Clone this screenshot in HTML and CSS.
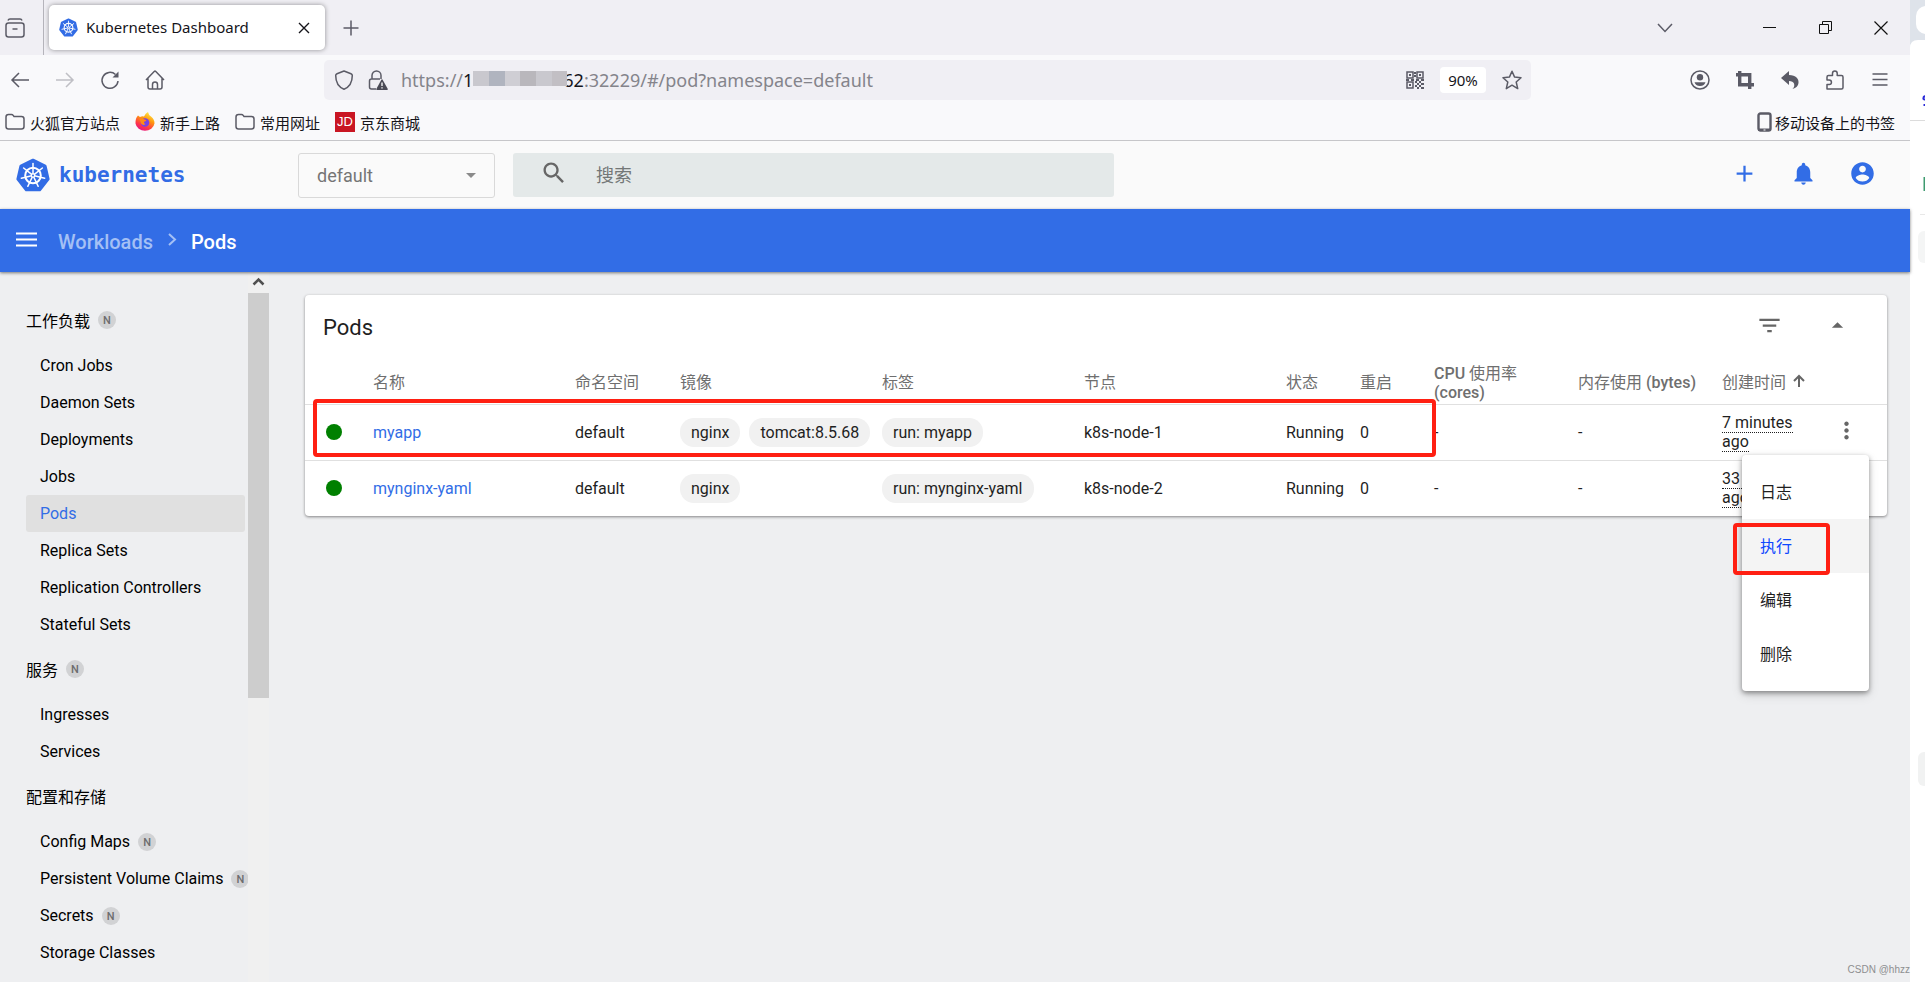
FILE: index.html
```html
<!DOCTYPE html>
<html lang="zh-CN">
<head>
<meta charset="utf-8">
<title>Kubernetes Dashboard</title>
<link rel="stylesheet" href="styles.css">
</head>
<body>
<svg class="defs" aria-hidden="true">
  <symbol id="k8s" viewBox="0 0 34 34">
    <path d="M17 2.2 29.1 8 32.1 21.1 23.7 31.7H10.3L1.9 21.1 4.9 8Z" fill="#326ce5" stroke="#326ce5" stroke-width="3" stroke-linejoin="round"/>
    <g fill="none" stroke="#fff" stroke-width="2">
      <circle cx="17" cy="17.5" r="7.8"/>
      <g id="spokes" stroke-width="1.5" stroke-linecap="round">
        <path d="M17 15V5.5"/>
        <path d="M17 15V5.5" transform="rotate(51.43 17 17.5)"/>
        <path d="M17 15V5.5" transform="rotate(102.86 17 17.5)"/>
        <path d="M17 15V5.5" transform="rotate(154.29 17 17.5)"/>
        <path d="M17 15V5.5" transform="rotate(205.71 17 17.5)"/>
        <path d="M17 15V5.5" transform="rotate(257.14 17 17.5)"/>
        <path d="M17 15V5.5" transform="rotate(308.57 17 17.5)"/>
      </g>
    </g>
    <circle cx="17" cy="17.5" r="2.4" fill="#fff"/>
    <circle cx="17" cy="17.5" r="1" fill="#326ce5"/>
  </symbol>
  <symbol id="folder" viewBox="0 0 20 20">
    <path d="M1 5Q1 2.500 3.500 2.500H6.500Q7.500 2.500 8.200 3.400L9 4.500H16.500Q19 4.500 19 7V14.500Q19 17 16.500 17H3.500Q1 17 1 14.500Z" fill="none" stroke="#5b5b66" stroke-width="1.500"/>
  </symbol>
</svg>
<div class="screen">
  <div class="window">
    <div class="tabstrip">
      <button class="ui-btn view-btn" aria-label="Firefox View"><svg width="20" height="20" viewBox="0 0 20 20" fill="none" stroke="#5b5b66" stroke-width="1.500"><rect x="1" y="5" width="18" height="14" rx="2.500"/><path d="M3 2.500Q3.500 1 5 1H15Q16.500 1 17 2.500M7.500 11H12.500"/></svg></button>
      <div class="tab">
        <svg width="19" height="19"><use href="#k8s"/></svg>
        <span class="tab-title">Kubernetes Dashboard</span>
        <button class="ui-btn" aria-label="关闭标签页"><svg width="12" height="12" viewBox="0 0 12 12" stroke="#15141a" stroke-width="1.400"><path d="M1 1 11 11M11 1 1 11"/></svg></button>
      </div>
      <button class="ui-btn add-btn" aria-label="新建标签页"><svg width="16" height="16" viewBox="0 0 16 16" stroke="#5b5b66" stroke-width="1.500"><path d="M8 .5V15.500M.5 8H15.500"/></svg></button>
      <div class="win-controls">
        <button class="ui-btn list-btn" aria-label="列出标签页"><svg width="16" height="10" viewBox="0 0 16 10" fill="none" stroke="#5b5b66" stroke-width="1.500"><path d="M1 1 8 8.500 15 1"/></svg></button>
        <button class="ui-btn" aria-label="最小化"><svg width="13" height="13" viewBox="0 0 13 13" stroke="#111"><path d="M0 6.500H13"/></svg></button>
        <button class="ui-btn" aria-label="还原"><svg width="13" height="13" viewBox="0 0 13 13" fill="none" stroke="#111"><path d="M.5 3.500H9.500V12.500H.5ZM3.500 3.500V.5H12.500V9.500H9.500"/></svg></button>
        <button class="ui-btn" aria-label="关闭"><svg width="14" height="14" viewBox="0 0 14 14" stroke="#111" stroke-width="1.200"><path d="M.5 .5 13.500 13.500M13.500 .5 .5 13.500"/></svg></button>
      </div>
    </div>

    <div class="navbar">
      <div class="nav-left">
        <button class="ui-btn" aria-label="后退"><svg width="20" height="20" viewBox="0 0 20 20" fill="none" stroke="#5b5b66" stroke-width="1.500"><path d="M19 10H2M9 3 2 10 9 17"/></svg></button>
        <button class="ui-btn" aria-label="前进"><svg width="20" height="20" viewBox="0 0 20 20" fill="none" stroke="#bfbfc5" stroke-width="1.500"><path d="M1 10H18M11 3 18 10 11 17"/></svg></button>
        <button class="ui-btn" aria-label="重新加载"><svg width="20" height="20" viewBox="0 0 20 20" fill="none" stroke="#5b5b66" stroke-width="1.500"><path d="M18 11A8 8 0 1 1 15.500 4.500"/><path d="M18.500 1.500V7.500H12.500Z" fill="#5b5b66" stroke="none"/></svg></button>
        <button class="ui-btn" aria-label="主页"><svg width="20" height="20" viewBox="0 0 20 20" fill="none" stroke="#5b5b66" stroke-width="1.500" stroke-linejoin="round"><path d="M1 10 9.200 1.500Q10 .8 10.800 1.500L19 10M3 8.500V17Q3 19 5 19H15Q17 19 17 17V8.500M7.500 19V14.500Q7.500 12 10 12T12.500 14.500V19"/></svg></button>
      </div>
      <div class="urlbar">
        <svg width="20" height="20" viewBox="0 0 20 20" fill="none" stroke="#5b5b66" stroke-width="1.500" stroke-linejoin="round"><path d="M10 1 17 3.700Q18.300 4.200 18.300 5.500C18.300 12 15.500 17 10 19.200C4.500 17 1.700 12 1.700 5.500Q1.700 4.200 3 3.700Z"/></svg>
        <svg class="lock" width="20" height="20" viewBox="0 0 20 20"><path d="M4 9V5.500A4.500 4.500 0 0 1 13 5.500V9M8 19H3.500Q1.500 19 1.500 17V11Q1.500 9 3.500 9H12" fill="none" stroke="#5b5b66" stroke-width="1.500"/><path d="M13.500 9.500Q14 8.800 14.500 9.500L19.800 19Q20 20 19 20H9Q8 20 8.300 19Z" fill="#4a4a55"/><path d="M14 12.500V16M14 17.200V18.500" stroke="#fff" stroke-width="1.300"/></svg>
        <div class="url" role="textbox" aria-label="地址" tabindex="0"><span>https://</span><b>1</b><i class="mosaic"><i></i><i></i><i></i><i></i><i></i><i></i></i><b>62</b><span>:32229/#/pod?namespace=default</span></div>
        <div class="url-actions">
          <button class="ui-btn" aria-label="二维码"><svg width="18" height="18" viewBox="0 0 18 18" fill="none" stroke="#5b5b66" stroke-width="1.500"><path d="M1 1H7V7H1ZM11 1H17V7H11ZM1 11H7V17H1Z"/><path d="M3 4H5M13 4H15M3 14H5M8 2H10M8 5H10M0 9H3M5 9H8M10 9H13M15 9H18M9 11H11M13 11H15M11 13H13M15 13H18M9 15H11M13 15H15M11 17H13M15 17H18" stroke-width="2"/></svg></button>
          <button class="ui-btn zoom">90%</button>
          <button class="ui-btn" aria-label="收藏"><svg width="20" height="20" viewBox="0 0 20 20" fill="none" stroke="#5b5b66" stroke-width="1.500" stroke-linejoin="round"><path d="M10 1.200 12.600 7.100 19 7.700 14.200 12 15.700 18.600 10 15.200 4.300 18.600 5.800 12 1 7.700 7.400 7.100Z"/></svg></button>
        </div>
      </div>
      <div class="nav-right">
        <button class="ui-btn" aria-label="账户"><svg width="20" height="20" viewBox="0 0 20 20"><circle cx="10" cy="10" r="9" fill="none" stroke="#5b5b66" stroke-width="1.500"/><circle cx="10" cy="7.300" r="3.200" fill="#5b5b66"/><path d="M4.500 12.300H15.500Q14.500 16 10 16T4.500 12.300Z" fill="#5b5b66"/></svg></button>
        <button class="ui-btn" aria-label="截图"><svg width="20" height="20" viewBox="0 0 20 20" fill="none" stroke="#5b5b66" stroke-width="3.400"><path d="M4.700 1V14.700H19M1 4.700H14.700V19"/></svg></button>
        <button class="ui-btn" aria-label="撤销"><svg width="20" height="20" viewBox="0 0 20 20" fill="#5b5b66"><path d="M1 8 9 1V5C16 5 19 9 18.500 13Q18 17.500 12.500 19Q15 16.500 14 13.500Q13 11 9 11V15Z"/></svg></button>
        <button class="ui-btn" aria-label="扩展"><svg width="20" height="20" viewBox="0 0 20 20" fill="none" stroke="#5b5b66" stroke-width="1.500" stroke-linejoin="round"><path d="M2 19V14.500H4.200A2.200 2.200 0 0 0 4.200 10H2V7Q2 5.500 3.500 5.500H7.500V3.300A2.300 2.300 0 0 1 12.200 3.300V5.500H16.500Q18 5.500 18 7V17.500Q18 19 16.500 19Z"/></svg></button>
        <button class="ui-btn" aria-label="菜单"><svg width="20" height="20" viewBox="0 0 20 20" stroke="#5b5b66" stroke-width="1.500"><path d="M2.500 4H17.500M2.500 9.500H17.500M2.500 15H17.500"/></svg></button>
      </div>
    </div>

    <div class="bookmarks">
      <a href="#"><svg width="20" height="20"><use href="#folder"/></svg>火狐官方站点</a>
      <a href="#"><svg width="20" height="20" viewBox="0 0 20 20"><defs><linearGradient id="fx" x1=".8" y1="0" x2=".3" y2="1"><stop offset="0" stop-color="#fff44f"/><stop offset=".4" stop-color="#ff980e"/><stop offset=".75" stop-color="#ff3647"/><stop offset="1" stop-color="#e31587"/></linearGradient></defs><path d="M3 3.500 5 5Q7 4 9 4.500Q10.500 1 13 0Q13.500 3 16 4.500Q19.700 7.500 19.500 11.500A9.600 8.500 0 0 1 .5 11.500Q.3 6 3 3.500Z" fill="url(#fx)"/><circle cx="10" cy="10.500" r="4.300" fill="#7542e5"/><path d="M4.500 7Q7 5.500 9.500 7.500L11.500 8Q11 9.500 9 9.800Q8.500 11.500 10.500 12Q8 14 6 11.500Z" fill="#ff8a16"/></svg>新手上路</a>
      <a href="#"><svg width="20" height="20"><use href="#folder"/></svg>常用网址</a>
      <a href="#"><span class="jd">JD</span>京东商城</a>
      <a href="#" class="mobile"><svg width="16" height="20" viewBox="0 0 16 20"><rect x="1.500" y="1.500" width="12" height="17" rx="2" fill="none" stroke="#5b5b66" stroke-width="2.400"/><path d="M1 16.500H14V19H1Z" fill="#5b5b66"/><path d="M6.500 18H8.500" stroke="#fff"/></svg>移动设备上的书签</a>
    </div>

    <header class="appbar">
      <a href="#" class="brand"><svg width="34" height="34"><use href="#k8s"/></svg><span>kubernetes</span></a>
      <div class="namespace">
        <select aria-label="命名空间"><option>default</option></select>
        <svg width="10" height="5" viewBox="0 0 10 5"><path d="M0 0H10L5 5Z" fill="#8a8a8a"/></svg>
      </div>
      <label class="search">
        <svg width="28" height="28" viewBox="0 0 24 24" fill="#666"><path d="M15.500 14h-.79l-.28-.27C15.410 12.590 16 11.110 16 9.500 16 5.910 13.090 3 9.500 3S3 5.910 3 9.500 5.910 16 9.500 16c1.610 0 3.090-.59 4.230-1.570l.27.28v.79l5 4.990L20.490 19l-4.990-5zm-6 0C7.010 14 5 11.990 5 9.500S7.010 5 9.500 5 14 7.010 14 9.500 11.990 14 9.500 14z"/></svg>
        <input type="text" placeholder="搜索" aria-label="搜索">
      </label>
      <div class="app-actions">
        <button class="ui-btn" aria-label="创建"><svg width="27" height="27" viewBox="0 0 24 24" fill="#326de6"><path d="M19 13h-6v6h-2v-6H5v-2h6V5h2v6h6z"/></svg></button>
        <button class="ui-btn" aria-label="通知"><svg width="27" height="27" viewBox="0 0 24 24" fill="#326de6"><path d="M12 22c1.100 0 2-.9 2-2h-4c0 1.100.89 2 2 2zm6-6v-5c0-3.070-1.640-5.640-4.500-6.320V4c0-.83-.67-1.500-1.500-1.500s-1.500.67-1.500 1.500v.68C7.630 5.360 6 7.920 6 11v5l-2 2v1h16v-1z"/></svg></button>
        <button class="ui-btn" aria-label="用户"><svg width="27" height="27" viewBox="0 0 24 24" fill="#326de6"><path d="M12 2C6.480 2 2 6.480 2 12s4.480 10 10 10 10-4.480 10-10S17.520 2 12 2zm0 3c1.660 0 3 1.340 3 3s-1.340 3-3 3-3-1.340-3-3 1.340-3 3-3zm0 14.200c-2.500 0-4.710-1.280-6-3.220.03-1.990 4-3.080 6-3.080 1.990 0 5.970 1.090 6 3.080-1.290 1.940-3.500 3.220-6 3.220z"/></svg></button>
      </div>
    </header>

    <nav class="crumbs" aria-label="面包屑">
      <button class="ui-btn" aria-label="导航菜单"><svg width="21" height="15" viewBox="0 0 21 15" stroke="#fff" stroke-width="2"><path d="M0 1.500H21M0 7.500H21M0 13.500H21"/></svg></button>
      <a href="#">Workloads</a>
      <svg width="9" height="13" viewBox="0 0 9 13" fill="none" stroke="#a4c0f5" stroke-width="2"><path d="M1 1 7 6.500 1 12"/></svg>
      <span>Pods</span>
    </nav>

    <div class="body">
      <aside class="sidebar">
        <nav class="menu">
          <h2>工作负载 <span class="badge">N</span></h2>
          <ul>
            <li><a href="#">Cron Jobs</a></li>
            <li><a href="#">Daemon Sets</a></li>
            <li><a href="#">Deployments</a></li>
            <li><a href="#">Jobs</a></li>
            <li><a href="#" class="active">Pods</a></li>
            <li><a href="#">Replica Sets</a></li>
            <li><a href="#">Replication Controllers</a></li>
            <li><a href="#">Stateful Sets</a></li>
          </ul>
          <h2>服务 <span class="badge">N</span></h2>
          <ul>
            <li><a href="#">Ingresses</a></li>
            <li><a href="#">Services</a></li>
          </ul>
          <h2>配置和存储</h2>
          <ul>
            <li><a href="#">Config Maps <span class="badge">N</span></a></li>
            <li><a href="#">Persistent Volume Claims <span class="badge">N</span></a></li>
            <li><a href="#">Secrets <span class="badge">N</span></a></li>
            <li><a href="#">Storage Classes</a></li>
          </ul>
        </nav>
        <div class="scrollbar">
          <svg width="21" height="21" viewBox="0 0 21 21" fill="none" stroke="#505050" stroke-width="2.500"><path d="M5.500 12.500 10.500 7.500 15.500 12.500"/></svg>
          <div class="thumb"></div>
        </div>
      </aside>

      <main>
        <section class="card">
          <div class="card-head">
            <h1>Pods</h1>
            <button class="ui-btn" aria-label="筛选"><svg width="27" height="27" viewBox="0 0 24 24" fill="#666"><path d="M10 18h4v-2h-4v2zM3 6v2h18V6H3zm3 7h12v-2H6v2z"/></svg></button>
            <button class="ui-btn" aria-label="折叠"><svg width="27" height="27" viewBox="0 0 24 24" fill="#666"><path d="M7 14l5-5 5 5z"/></svg></button>
          </div>
          <table>
            <colgroup><col class="c-dot"><col class="c-wide"><col class="c-ns"><col class="c-wide"><col class="c-wide"><col class="c-wide"><col class="c-num"><col class="c-num"><col class="c-use"><col class="c-use"><col class="c-time"><col class="c-more"></colgroup>
            <thead>
              <tr><th></th><th>名称</th><th>命名空间</th><th>镜像</th><th>标签</th><th>节点</th><th>状态</th><th>重启</th><th><b>CPU</b> 使用率 <b>(cores)</b></th><th>内存使用 <b>(bytes)</b></th><th>创建时间 <svg width="12" height="14" viewBox="0 0 12 14" fill="none" stroke="#666" stroke-width="2"><path d="M6 13V2M1 7 6 2 11 7"/></svg></th><th></th></tr>
            </thead>
            <tbody>
              <tr><td><span class="dot"></span></td><td><a href="#">myapp</a></td><td>default</td><td class="chips"><span class="chip">nginx</span><span class="chip">tomcat:8.5.68</span></td><td><span class="chip">run: myapp</span></td><td>k8s-node-1</td><td>Running</td><td>0</td><td>-</td><td>-</td><td class="age"><span>7 minutes ago</span></td><td><button class="ui-btn" aria-label="更多"><svg width="27" height="27" viewBox="0 0 24 24" fill="#666"><path d="M12 8c1.100 0 2-.9 2-2s-.9-2-2-2-2 .9-2 2 .9 2 2 2zm0 2c-1.100 0-2 .9-2 2s.9 2 2 2 2-.9 2-2-.9-2-2-2zm0 6c-1.100 0-2 .9-2 2s.9 2 2 2 2-.9 2-2-.9-2-2-2z"/></svg></button></td></tr>
              <tr><td><span class="dot"></span></td><td><a href="#">mynginx-yaml</a></td><td>default</td><td class="chips"><span class="chip">nginx</span></td><td><span class="chip">run: mynginx-yaml</span></td><td>k8s-node-2</td><td>Running</td><td>0</td><td>-</td><td>-</td><td class="age"><span>33 minutes ago</span></td><td></td></tr>
            </tbody>
          </table>
          <div class="mark mark-row"></div>
          <div class="popup" role="menu">
            <button role="menuitem">日志</button>
            <button role="menuitem" class="hover">执行</button>
            <button role="menuitem">编辑</button>
            <button role="menuitem">删除</button>
            <div class="mark mark-item"></div>
          </div>
        </section>
        <div class="watermark">CSDN @hhzz</div>
      </main>
    </div>
  </div>
  <div class="behind">
    <svg width="15" height="982" viewBox="0 0 15 982"><path d="M0 0H15V52H0Z" fill="#dee3ea"/><path d="M0 56V48Q0 40 8 40H15V56Z" fill="#fff"/><rect x="6" y="6" width="26" height="28" rx="10" fill="#fff"/><path d="M0 120.500H15" stroke="#dcdcdc"/><path d="M15 96Q13 97 13.500 99L15 100M13.500 105H15" stroke="#2a2ad8" stroke-width="2" fill="none"/><path d="M13.500 177H15V191H13.500Z" fill="#3f9b70"/><path d="M10 214.500H15" stroke="#e8e8e8"/><rect x="8" y="231" width="20" height="32" rx="6" fill="#f4f5f5"/><rect x="8" y="752" width="20" height="34" rx="6" fill="#f1f2f2"/></svg>
  </div>
</div>
</body>
</html>
```
FILE: styles.css
```css
* { box-sizing: border-box; }
body {
  margin: 0;
  font-family: Roboto, "Noto Sans CJK SC", sans-serif;
  font-size: 16px;
  color: #1f1f1f;
  background: #fff;
}
h1, h2, ul { margin: 0; padding: 0; font-weight: 400; list-style: none; }
a { color: inherit; text-decoration: none; }
svg { display: block; flex: none; }
.defs { position: absolute; width: 0; height: 0; }
.screen { display: flex; min-height: 100vh; }
.window { flex: 1; min-width: 0; display: flex; flex-direction: column; }
.behind { width: 15px; height: 100vh; overflow: hidden; }

.ui-btn {
  display: inline-flex;
  align-items: center;
  justify-content: center;
  padding: 0;
  border: 0;
  background: none;
  color: inherit;
  font: inherit;
}

/* browser frame */
.tabstrip, .navbar, .bookmarks { font-family: "Noto Sans", "Noto Sans CJK SC", sans-serif; color: #15141a; }
.tabstrip { display: flex; height: 55px; background: #f0eff4; align-items: center; }
.view-btn { width: 44px; height: 55px; padding-right: 13px; border-right: 1px solid #b5b4bb; }
.tab {
  display: flex;
  align-items: center;
  width: 276px;
  height: 45px;
  margin-left: 5px;
  padding: 0 15px 0 10px;
  background: #fff;
  border-radius: 5px;
  box-shadow: 0 0 5px rgba(0, 0, 0, .4);
}
.tab-title { flex: 1; margin-left: 8px; padding-bottom: 2px; font-size: 15px; }
.add-btn { margin-left: 18px; }
.win-controls { display: flex; margin-left: auto; padding-right: 1px; }
.win-controls .ui-btn { width: 56px; height: 54px; }
.win-controls .list-btn { margin-right: 48px; }

.navbar { display: flex; height: 50px; padding: 5px 8px 5px 0; background: #f9f9fb; align-items: center; }
.nav-left { display: flex; gap: 25px; padding-left: 10px; width: 324px; }
.urlbar {
  display: flex;
  flex: 1;
  align-items: center;
  height: 40px;
  padding: 0 9px 0 10px;
  background: #f0eff4;
  border-radius: 5px;
}
.lock { margin: 0 13px 0 14px; }
.url { display: flex; align-items: center; color: #84848b; font-size: 18px; white-space: nowrap; }
.url b { color: #15141a; font-weight: 400; }
.mosaic { position: relative; display: flex; width: 94px; height: 15px; margin: 0 -4px 4px 0; }
.mosaic i { flex: 1; background: #c9c8ce; }
.mosaic i:nth-child(2) { background: #b0b4bf; }
.mosaic i:nth-child(3) { background: #cfced4; }
.mosaic i:nth-child(4) { background: #b9b7bc; }
.mosaic i:nth-child(6) { background: #c2bfc4; }
.url-actions { display: flex; align-items: center; gap: 16px; margin-left: auto; }
.zoom { width: 46px; height: 26px; background: #fff; border-radius: 4px; font-size: 15px; }
.nav-right { display: flex; gap: 25px; padding: 0 12px 0 159px; }

.bookmarks {
  display: flex;
  height: 36px;
  padding: 0 15px 1px 5px;
  gap: 15px;
  align-items: center;
  background: #f9f9fb;
  border-bottom: 1px solid #c6c6c9;
  font-size: 15px;
}
.bookmarks a { display: flex; align-items: center; gap: 5px; }
.bookmarks .mobile { margin-left: auto; gap: 2px; }
.jd {
  width: 20px;
  background: #c91623;
  color: #fff;
  font: 13px/20px "Liberation Sans", sans-serif;
  text-align: center;
}

/* dashboard header */
.appbar { display: flex; align-items: center; height: 68px; background: #fafafa; padding: 0 34px 0 16px; }
.brand {
  display: flex;
  align-items: center;
  gap: 9px;
  width: 282px;
  color: #326ce5;
  font: bold 21px "DejaVu Sans Mono", monospace;
}
.namespace {
  display: grid;
  align-items: center;
  width: 197px;
  height: 45px;
  border: 1px solid #d9d9d9;
  border-radius: 3px;
}
.namespace select {
  grid-area: 1 / 1;
  appearance: none;
  height: 43px;
  padding: 0 18px;
  border: 0;
  background: none;
  color: #757575;
  font: 18px Roboto, sans-serif;
}
.namespace svg { grid-area: 1 / 1; justify-self: end; margin-right: 18px; pointer-events: none; }
.search {
  display: flex;
  align-items: center;
  width: 601px;
  height: 44px;
  margin-left: 18px;
  padding-left: 27px;
  background: #e4e9e9;
  border-radius: 3px;
}
.search svg { margin-bottom: 5px; }
.search input {
  flex: 1;
  min-width: 0;
  margin-left: 28px;
  padding: 0;
  border: 0;
  outline: 0;
  background: none;
  font: 18px Roboto, "Noto Sans CJK SC", sans-serif;
}
.search input::placeholder { color: #737777; }
.app-actions { display: flex; gap: 32px; margin-left: auto; padding-bottom: 4px; }

.crumbs {
  position: relative;
  display: flex;
  align-items: center;
  height: 63px;
  padding: 0 0 2px 16px;
  background: #326de6;
  box-shadow: 0 1px 3px rgba(0, 0, 0, .5);
  color: #fff;
  font-size: 20px;
  font-weight: 500;
}
.crumbs a { margin: 4px 15px 0 21px; color: #a4c0f5; }
.crumbs span { margin: 4px 0 0 14px; }

/* sidebar */
.body { display: flex; flex: 1; background: #eeeff1; }
.sidebar { display: flex; width: 269px; }
.menu { width: 248px; padding: 23px 3px 0 26px; color: #000; }
.menu h2 { display: flex; align-items: center; gap: 8px; height: 49px; font-size: 16px; }
.menu a { display: flex; align-items: center; gap: 8px; height: 37px; padding-left: 14px; border-radius: 3px; white-space: nowrap; }
.menu ul { padding: 3px 0 1px; }
.menu a.active { background: #e0e0e0; color: #326de6; }
.badge {
  flex: none;
  width: 18px;
  height: 18px;
  border-radius: 50%;
  background: #d1d2d4;
  color: #6c6c6e;
  font-size: 11px;
  font-weight: 500;
  line-height: 19px;
  text-align: center;
}
.scrollbar { width: 21px; background: #f0f0f0; }
.thumb { height: 57%; background: #cdcdcd; }

/* pod list */
main { position: relative; flex: 1; min-width: 0; padding: 23px 23px 0 36px; }
.card { position: relative; background: #fff; border-radius: 4px; box-shadow: 0 1px 3px rgba(0, 0, 0, .45); }
.card-head { display: flex; align-items: center; height: 64px; padding: 0 36px 0 18px; }
.card-head h1 { flex: 1; font-size: 22px; }
.card-head .ui-btn { padding-bottom: 3px; }
.card-head .ui-btn + .ui-btn { margin-left: 41px; }
table { width: 100%; table-layout: fixed; border-collapse: collapse; line-height: 19px; }
.c-dot { width: 68px; }
.c-wide { width: 202px; }
.c-ns { width: 105px; }
.c-num { width: 74px; }
.c-use { width: 144px; }
.c-time { width: 111px; }
.c-more { width: 54px; }
th, td { padding: 0; text-align: left; }
th { height: 45px; padding-top: 3px; color: #6f6f6f; font-weight: 400; white-space: nowrap; }
th:nth-child(9) { padding-right: 40px; white-space: normal; }
th b { font-weight: 500; }
th svg { display: inline-block; margin-left: 3px; }
td { height: 56px; border-top: 1px solid #e0e0e0; }
td:first-child { padding-left: 21px; }
td a { color: #326de6; }
.dot { display: block; width: 16px; height: 16px; border-radius: 50%; background: #008000; }
.chips { white-space: nowrap; }
.chip {
  display: inline-block;
  margin-right: 9px;
  padding: 0 11px;
  border-radius: 14px;
  background: #f1f1f1;
  line-height: 29px;
}
.age { padding-right: 24px; }
.age span { border-bottom: 1px dotted #1f1f1f; }

.popup {
  position: absolute;
  top: 160px;
  right: 18px;
  width: 127px;
  padding: 10px 0;
  background: #fff;
  border-radius: 4px;
  box-shadow: 0 2px 5px rgba(0, 0, 0, .4), 0 4px 12px rgba(0, 0, 0, .12);
}
.popup button {
  display: block;
  width: 100%;
  height: 54px;
  padding: 0 18px 3px;
  border: 0;
  background: none;
  color: #1f1f1f;
  font: 16px Roboto, "Noto Sans CJK SC", sans-serif;
  text-align: left;
}
.popup .hover { background: #f4f4f4; color: #0d47ff; }
.mark { position: absolute; border: 4px solid #ff1f12; border-radius: 4px; pointer-events: none; }
.mark-row { top: 104px; left: 8px; right: 451px; height: 58px; }
.mark-item { top: 68px; left: -9px; width: 97px; height: 52px; }
.watermark {
  position: absolute;
  right: 0;
  bottom: 7px;
  color: #8d8e90;
  font: 10px "Liberation Sans", sans-serif;
}
```
